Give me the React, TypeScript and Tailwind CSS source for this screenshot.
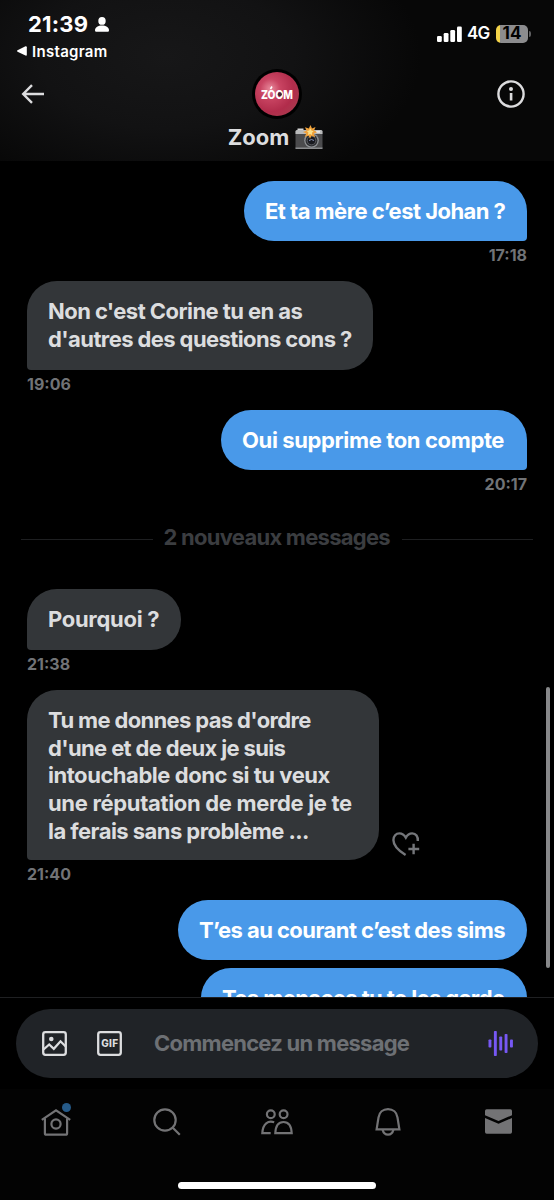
type Line = { text: string; tracking: string };

type Message = {
  id: number;
  mine: boolean;
  size: string;
  corner: string;
  lines: Line[];
  time?: string;
  reaction?: boolean;
};

const oldMessages: Message[] = [
  {
    id: 1,
    mine: true,
    size: 'w-[283px] h-[60px]',
    corner: 'rounded-br-[4px]',
    lines: [{ text: 'Et ta mère c’est Johan ?', tracking: 'tracking-[-0.54px]' }],
    time: '17:18',
  },
  {
    id: 2,
    mine: false,
    size: 'w-[346px] h-[89px]',
    corner: 'rounded-bl-[4px]',
    lines: [
      { text: "Non c'est Corine tu en as", tracking: 'tracking-[-0.56px]' },
      { text: "d'autres des questions cons ?", tracking: 'tracking-[-0.6px]' },
    ],
    time: '19:06',
  },
  {
    id: 3,
    mine: true,
    size: 'w-[306px] h-[60px]',
    corner: 'rounded-br-[4px]',
    lines: [{ text: 'Oui supprime ton compte', tracking: 'tracking-[-0.37px]' }],
    time: '20:17',
  },
];

const newMessages: Message[] = [
  {
    id: 4,
    mine: false,
    size: 'w-[154px] h-[61px]',
    corner: 'rounded-bl-[4px]',
    lines: [{ text: 'Pourquoi ?', tracking: 'tracking-[-0.3px]' }],
    time: '21:38',
  },
  {
    id: 5,
    mine: false,
    size: 'w-[352px] h-[170px]',
    corner: 'rounded-bl-[4px]',
    lines: [
      { text: "Tu me donnes pas d'ordre", tracking: 'tracking-[-0.65px]' },
      { text: "d'une et de deux je suis", tracking: 'tracking-[-0.65px]' },
      { text: 'intouchable donc si tu veux', tracking: 'tracking-[-0.46px]' },
      { text: 'une réputation de merde je te', tracking: 'tracking-[-0.33px]' },
      { text: 'la ferais sans problème ...', tracking: 'tracking-[-0.55px]' },
    ],
    time: '21:40',
    reaction: true,
  },
  {
    id: 6,
    mine: true,
    size: 'w-[349px] h-[60px] mb-2',
    corner: '',
    lines: [{ text: 'T’es au courant c’est des sims', tracking: 'tracking-[-0.56px]' }],
  },
  {
    id: 7,
    mine: true,
    size: 'w-[326px] h-[60px]',
    corner: 'rounded-br-[4px]',
    lines: [{ text: 'Tes menaces tu te les garde', tracking: 'tracking-[-0.6px]' }],
  },
];

function HeartPlus() {
  return (
    <svg width="28" height="25" viewBox="0 0 28 25" fill="none" stroke="#74767a" strokeWidth="2.4">
      <path d="M13.6 23C5.5 18 1.4 13.2 1.4 8C1.4 4 4 1.4 7.4 1.4C10.2 1.4 12.3 3 13.8 5.6C15.2 3 17.3 1.4 20.2 1.4C23.9 1.4 26.2 4.4 25.8 9" />
      <path d="M21.6 11.8v10.4M16.4 17h10.8" />
    </svg>
  );
}

function MessageRow({ message }: { message: Message }) {
  return (
    <div className={`flex flex-col ${message.mine ? 'items-end' : 'items-start'}`}>
      <div className="flex items-end">
        <div
          className={`rounded-[30px] px-[21px] pt-[17px] text-[22px] font-bold leading-[27.7px] ${message.size} ${message.corner} ${
            message.mine ? 'bg-[#4999e9] text-white' : 'bg-[#333639] text-[#dcdddf]'
          }`}
        >
          {message.lines.map((line) => (
            <p key={line.text} className={`whitespace-nowrap ${line.tracking}`}>
              {line.text}
            </p>
          ))}
        </div>
        {message.reaction && (
          <div className="mb-[3px] ml-[13px]">
            <HeartPlus />
          </div>
        )}
      </div>
      {message.time && (
        <div className="h-10 pt-1 text-[16px] font-bold leading-5 text-[#717376]">{message.time}</div>
      )}
    </div>
  );
}

function StatusBar() {
  return (
    <div className="flex h-16 justify-between text-white">
      <div className="pl-[17px] pt-[11px]">
        <div className="flex h-[26px] items-center gap-[7px] pl-[11px]">
          <span className="text-[22px] font-bold leading-none tracking-[0.2px]">21:39</span>
          <svg width="14" height="15" viewBox="0 0 14 15" fill="#fff">
            <ellipse cx="7" cy="3.9" rx="3.7" ry="3.9" />
            <path d="M0 13.2C0 10.6 3.2 8.6 7 8.6s7 2 7 4.600c0 1.200-.6 1.600-1.600 1.600H1.600C.6 14.800 0 14.400 0 13.200z" />
          </svg>
        </div>
        <div className="flex h-7 items-center gap-[5px]">
          <svg width="10" height="10" viewBox="0 0 10 10" fill="#fff">
            <path d="M.5 4.300L8.500.3Q9.800 0 9.800 1.200V8.800Q9.800 10 8.500 9.600L.5 5.700Q-.4 5 .5 4.300z" />
          </svg>
          <span className="text-[15px] font-semibold leading-none tracking-[0.3px]">Instagram</span>
        </div>
      </div>

      <div className="flex h-[67px] items-center pr-[23px]">
        <svg width="25" height="16" viewBox="0 0 25 16" fill="#fff">
          <rect x="0" y="10" width="4.800" height="6" rx="1.300" />
          <rect x="6.700" y="7" width="4.800" height="9" rx="1.300" />
          <rect x="13.300" y="4" width="4.800" height="12" rx="1.300" />
          <rect x="20" y="0.500" width="4.800" height="15.500" rx="1.300" />
        </svg>
        <span className="ml-[5px] w-[29px] text-[17px] font-semibold leading-none tracking-[-0.8px]">4G</span>
        <div className="flex h-[18px] w-8 items-center justify-center rounded-[5px] bg-[linear-gradient(90deg,#f3d34a_0_4.5px,#8c8c8e_4.5px)] text-[17px] font-bold leading-none tracking-[0.2px] text-black">
          14
        </div>
        <div className="ml-px h-[6px] w-[2px] rounded-r-full bg-[#5f5f61]" />
      </div>
    </div>
  );
}

function Avatar() {
  return (
    <svg width="50" height="50" viewBox="0 0 50 50">
      <defs>
        <radialGradient id="ball" cx="0.35" cy="0.38" r="0.75">
          <stop offset="0" stopColor="#e88a9c" />
          <stop offset="0.3" stopColor="#c94462" />
          <stop offset="0.7" stopColor="#b12c4b" />
          <stop offset="1" stopColor="#a83a4e" />
        </radialGradient>
      </defs>
      <circle cx="25" cy="25" r="25" fill="#000" />
      <circle cx="25" cy="25" r="22" fill="url(#ball)" />
      <text
        x="25"
        y="29.500"
        textAnchor="middle"
        textLength="32"
        lengthAdjust="spacingAndGlyphs"
        fontFamily="Inter, sans-serif"
        fontSize="12"
        fontWeight="800"
        fill="#fff"
      >
        ZOOM
      </text>
      <circle cx="27.900" cy="25.200" r="2" fill="#3b2630" />
      <path d="M18.500 20l1.500-2.500" stroke="#fff" strokeWidth="1.500" />
    </svg>
  );
}

function CameraFlash() {
  return (
    <svg width="28" height="25" viewBox="0 0 28 25">
      <path d="M2.500 3.500h6v3h-6z" fill="#d6d6d6" />
      <rect x="0.500" y="5" width="27" height="19" rx="1.500" fill="#4b4b4d" />
      <path d="M.5 9V6.500Q.5 5 2 5h24q1.500 0 1.500 1.500V9z" fill="#b9babb" />
      <path d="M.5 22.500h27V24H.5z" fill="#8b8c8e" />
      <path d="M21 5.800h4v2h-4z" fill="#e8e8e8" />
      <circle cx="16.500" cy="15.500" r="7.300" fill="#8f9296" />
      <circle cx="16.500" cy="15.500" r="6" fill="#2c2d30" />
      <circle cx="16.500" cy="15.500" r="4.300" fill="#18191f" stroke="#64666b" strokeWidth="0.800" />
      <path d="M14 15.500q2.500-2 5 0" stroke="#8792b5" fill="none" />
      <path d="M15.500 0l1.500 3.400L20.500 2l-1.400 3.500 3 1.800-3.300 1.200 1.400 3.700-3.700-1.400L15 13.800l-1.500-3.300-3.800 1.500 1.600-3.500L8 7l3.500-1.200L10 2.200l3.800 1.400z" fill="#f0a13a" />
      <path d="M15.400 3.300l1 2.200 2.200.7-1.700 1.600.2 2.100-2-1-2.200 1 .5-2.300-1.600-1.500 2.300-.5z" fill="#fbe08a" />
    </svg>
  );
}

function Header() {
  return (
    <header className="h-[161px] shrink-0 bg-[#070707] bg-[radial-gradient(ellipse_46%_90%_at_30%_35%,#171718_0%,#121213_50%,#070707_100%)]">
      <StatusBar />
      <div className="grid h-[59px] grid-cols-[1fr_50px_1fr] items-center pl-[21px] pr-[29px]">
        <svg width="28" height="20" viewBox="0 0 28 20" fill="none" stroke="#dcdcde" strokeWidth="2.400">
          <path d="M23 10H2.500M11 1.200L2.200 10l8.800 8.800" />
        </svg>
        <div className="ml-1 w-[50px]">
          <Avatar />
        </div>
        <svg className="justify-self-end" width="28" height="28" viewBox="0 0 28 28">
          <circle cx="14" cy="14" r="12.600" fill="none" stroke="#dcdcde" strokeWidth="2.400" />
          <circle cx="14" cy="9" r="2" fill="#dcdcde" />
          <path d="M12.800 13h2.600v7.500h-2.600z" fill="#dcdcde" />
        </svg>
      </div>
      <div className="flex h-7 items-center justify-center gap-[6px] pr-[3px]">
        <h1 className="text-[22px] font-bold leading-none text-[#dcdddf]">Zoom</h1>
        <CameraFlash />
      </div>
    </header>
  );
}

function Composer() {
  return (
    <div className="h-[92px] shrink-0 border-t border-[#1f2022] bg-black px-4 pt-[11px]">
      <div className="flex h-[69px] items-center rounded-full bg-[#202327] pl-[26px] pr-6">
        <svg width="25" height="25" viewBox="0 0 25 25" fill="none" stroke="#dcdddf" strokeWidth="2.300">
          <rect x="1.200" y="1.200" width="22.600" height="22.600" rx="2.200" />
          <circle cx="9.300" cy="8" r="2.300" fill="#dcdddf" stroke="none" />
          <path d="M1.500 18.500l5.700-5 4.600 4.300 6.700-7.500 5.500 5.500" />
        </svg>
        <svg className="ml-[30px]" width="25" height="25" viewBox="0 0 25 25">
          <rect x="1.200" y="1.200" width="22.600" height="22.600" rx="2.200" fill="none" stroke="#dcdddf" strokeWidth="2.300" />
          <text
            x="12.700"
            y="16"
            textAnchor="middle"
            textLength="17"
            fontFamily="Inter, sans-serif"
            fontSize="10"
            fontWeight="800"
            fill="#dcdddf"
          >
            GIF
          </text>
        </svg>
        <span className="mb-[2px] ml-8 flex-1 whitespace-nowrap text-[22px] font-bold leading-none tracking-[-0.76px] text-[#6d7074]">
          Commencez un message
        </span>
        <svg width="26" height="25" viewBox="0 0 26 25" fill="#7758f4">
          <rect x="0.500" y="8.500" width="2.900" height="8" rx="0.800" />
          <rect x="5.900" y="0" width="2.900" height="25" rx="0.800" />
          <rect x="11.300" y="5.500" width="2.900" height="14" rx="0.800" />
          <rect x="16.600" y="3" width="2.900" height="19" rx="0.800" />
          <rect x="22" y="8.500" width="2.900" height="8" rx="0.800" />
        </svg>
      </div>
    </div>
  );
}

function TabBar() {
  return (
    <nav className="h-[111px] shrink-0 bg-[#030303]">
      <div className="grid h-[65px] grid-cols-5 place-items-center pl-px">
        {/* Home */}
        <div className="relative">
          <svg width="30" height="28" viewBox="0 0 30 28" fill="none" stroke="#737375" strokeWidth="2.200">
            <path d="M.8 11.800L15 2.400l14.200 9.400" />
            <path d="M3.900 10.200v15q0 1.500 1.500 1.500h19.200q1.500 0 1.500-1.500v-15" />
            <circle cx="15" cy="16" r="4.600" />
          </svg>
          <span className="absolute -top-[5px] right-0 h-[9px] w-[9px] rounded-full bg-[#265a88]" />
        </div>
        {/* Search */}
        <svg width="28" height="28" viewBox="0 0 28 28" fill="none" stroke="#737375" strokeWidth="2.200">
          <circle cx="12" cy="12" r="10.700" />
          <path d="M19.500 19.500l7.300 7.300" />
        </svg>
        {/* Communities */}
        <svg width="32" height="26" viewBox="0 0 32 26" fill="none" stroke="#737375" strokeWidth="2.200">
          <circle cx="9.800" cy="5.300" r="3.900" />
          <circle cx="22.600" cy="5.300" r="3.900" />
          <path d="M13.200 13.200C7.200 11.200 1.800 14.500 1.300 24.200h8.400" />
          <path d="M14.300 24.200C14.600 17 17.600 13 22.500 13s7.900 4 8.200 11.200z" />
        </svg>
        {/* Notifications */}
        <svg width="26" height="28" viewBox="0 0 26 28" fill="none" stroke="#737375" strokeWidth="2.200">
          <path d="M1.600 21.400L3.500 9.500C4.200 4.400 8 1.200 13 1.200s8.800 3.200 9.500 8.300l1.900 11.900z" />
          <path d="M7.600 21.800c.7 3 2.700 4.900 5.400 4.900s4.700-1.900 5.400-4.900" />
        </svg>
        {/* Messages */}
        <svg width="27" height="25" viewBox="0 0 27 25" fill="#737375">
          <path d="M0 6.200V2Q0 .3 1.700.3h23.600Q27 .3 27 2v4.200L13.500 12z" />
          <path d="M0 9l13.500 5.800L27 9v14q0 1.700-1.700 1.700H1.700Q0 24.700 0 23z" />
        </svg>
      </div>
      <div className="mx-auto mt-7 h-[7px] w-[198px] rounded-full bg-white" />
    </nav>
  );
}

export default function App() {
  return (
    <div className="flex h-[1200px] w-[554px] flex-col overflow-hidden bg-black font-['Inter',sans-serif]">
      <Header />

      <main className="relative min-h-0 flex-1 overflow-hidden px-[27px] pt-5">
        {oldMessages.map((message) => (
          <MessageRow key={message.id} message={message} />
        ))}

        {/* Unread separator */}
        <div className="-mx-[6px] mb-[21px] flex h-[58px] items-center">
          <div className="h-px flex-1 bg-[#1e1f21]" />
          <span className="mx-[11px] -mt-[5px] w-[227px] whitespace-nowrap text-[22px] font-bold leading-7 tracking-[-0.74px] text-[#3b3d40]">
            2 nouveaux messages
          </span>
          <div className="h-px flex-1 bg-[#1e1f21]" />
        </div>

        {newMessages.map((message) => (
          <MessageRow key={message.id} message={message} />
        ))}

        {/* Scroll thumb */}
        <div className="absolute right-1 top-[526px] h-[281px] w-1 rounded-full bg-[#87888a]" />
      </main>

      <Composer />
      <TabBar />
    </div>
  );
}
